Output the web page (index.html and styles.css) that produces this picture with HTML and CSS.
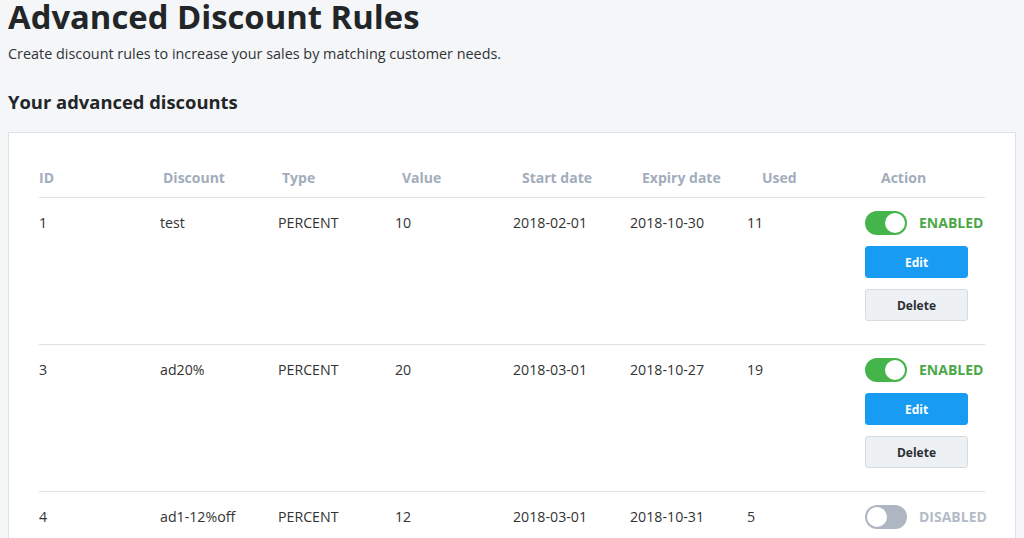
FILE: index.html
```html
<!DOCTYPE html>
<html lang="en">
<head>
  <meta charset="UTF-8" />
  <title>Advanced Discount Rules</title>
  <link rel="stylesheet" href="styles.css">
</head>
<body>
  <h1>Advanced Discount Rules</h1>
  <p class="lead">Create discount rules to increase your sales by matching customer needs.</p>
  <h2>Your advanced discounts</h2>

  <div class="card">
    <div class="head">
      <div>ID</div>
      <div>Discount</div>
      <div>Type</div>
      <div>Value</div>
      <div>Start date</div>
      <div>Expiry date</div>
      <div>Used</div>
      <div>Action</div>
    </div>

    <div class="row">
      <div class="cell">1</div>
      <div class="cell">test</div>
      <div class="cell">PERCENT</div>
      <div class="cell">10</div>
      <div class="cell">2018-02-01</div>
      <div class="cell">2018-10-30</div>
      <div class="cell">11</div>
      <div class="actions">
        <div class="status on"><span class="toggle"></span>ENABLED</div>
        <button class="btn edit">Edit</button>
        <button class="btn delete">Delete</button>
      </div>
    </div>

    <div class="row">
      <div class="cell">3</div>
      <div class="cell">ad20%</div>
      <div class="cell">PERCENT</div>
      <div class="cell">20</div>
      <div class="cell">2018-03-01</div>
      <div class="cell">2018-10-27</div>
      <div class="cell">19</div>
      <div class="actions">
        <div class="status on"><span class="toggle"></span>ENABLED</div>
        <button class="btn edit">Edit</button>
        <button class="btn delete">Delete</button>
      </div>
    </div>

    <div class="row">
      <div class="cell">4</div>
      <div class="cell">ad1-12%off</div>
      <div class="cell">PERCENT</div>
      <div class="cell">12</div>
      <div class="cell">2018-03-01</div>
      <div class="cell">2018-10-31</div>
      <div class="cell">5</div>
      <div class="actions">
        <div class="status off"><span class="toggle"></span>DISABLED</div>
        <button class="btn edit">Edit</button>
        <button class="btn delete">Delete</button>
      </div>
    </div>
  </div>
</body>
</html>
```

FILE: styles.css
```css
body {
  margin: 0;
  padding: 0 8px;
  background: #f5f6f8;
  font-family: "Open Sans", "Noto Sans", sans-serif;
  color: #333;
  overflow: hidden;
}
h1 {
  margin: 0;
  padding-top: 1px;
  font-size: 32.8px;
  line-height: 31px;
  font-weight: 700;
  color: #222629;
}
.lead {
  margin: 12px 0 0;
  font-size: 14.4px;
  line-height: 20px;
  color: #2f3336;
}
h2 {
  margin: 26px 0 0;
  font-size: 18.4px;
  line-height: 24px;
  font-weight: 700;
  color: #222629;
}
.card {
  margin-top: 18px;
  background: #fff;
  border: 1px solid #dde2e7;
  padding: 35px 30px 0;
}
.head {
  display: grid;
  grid-template-columns: 124px 119px 120px 120px 120px 120px 119px 1fr;
  font-size: 14px;
  line-height: 20px;
  font-weight: 700;
  color: #a2adbb;
  padding-bottom: 9px;
  border-bottom: 1px solid #dde1e6;
}
.row {
  display: grid;
  grid-template-columns: 121px 118px 117px 118px 117px 117px 118px 1fr;
  align-items: start;
  padding: 13px 0 23px;
  border-bottom: 1px solid #dde1e6;
  font-size: 14.2px;
  color: #333;
}
.cell {
  line-height: 20px;
  padding-top: 2px;
}
.actions {
  display: flex;
  flex-direction: column;
  align-items: flex-start;
}
.status {
  display: flex;
  align-items: center;
  font-weight: 700;
  font-size: 14px;
  line-height: 24px;
}
.status.on {
  color: #4aa846;
}
.status.off {
  color: #b3bcc6;
}
.toggle {
  position: relative;
  width: 42px;
  height: 24px;
  border-radius: 12px;
  margin-right: 12px;
  background: #45b54b;
}
.toggle::after {
  content: "";
  position: absolute;
  top: 2px;
  right: 2px;
  width: 20px;
  height: 20px;
  border-radius: 50%;
  background: #fff;
}
.status.off .toggle {
  background: #aeb7c1;
}
.status.off .toggle::after {
  right: auto;
  left: 2px;
}
.btn {
  width: 103px;
  height: 32px;
  margin-top: 11px;
  border-radius: 3px;
  font-family: "Open Sans", "Noto Sans", sans-serif;
  font-size: 12px;
  font-weight: 700;
  cursor: pointer;
}
.edit {
  background: #189cf3;
  border: 1px solid #189cf3;
  color: #fff;
}
.delete {
  background: #eef1f4;
  border: 1px solid #d5dbe1;
  color: #2b2f33;
}
```
